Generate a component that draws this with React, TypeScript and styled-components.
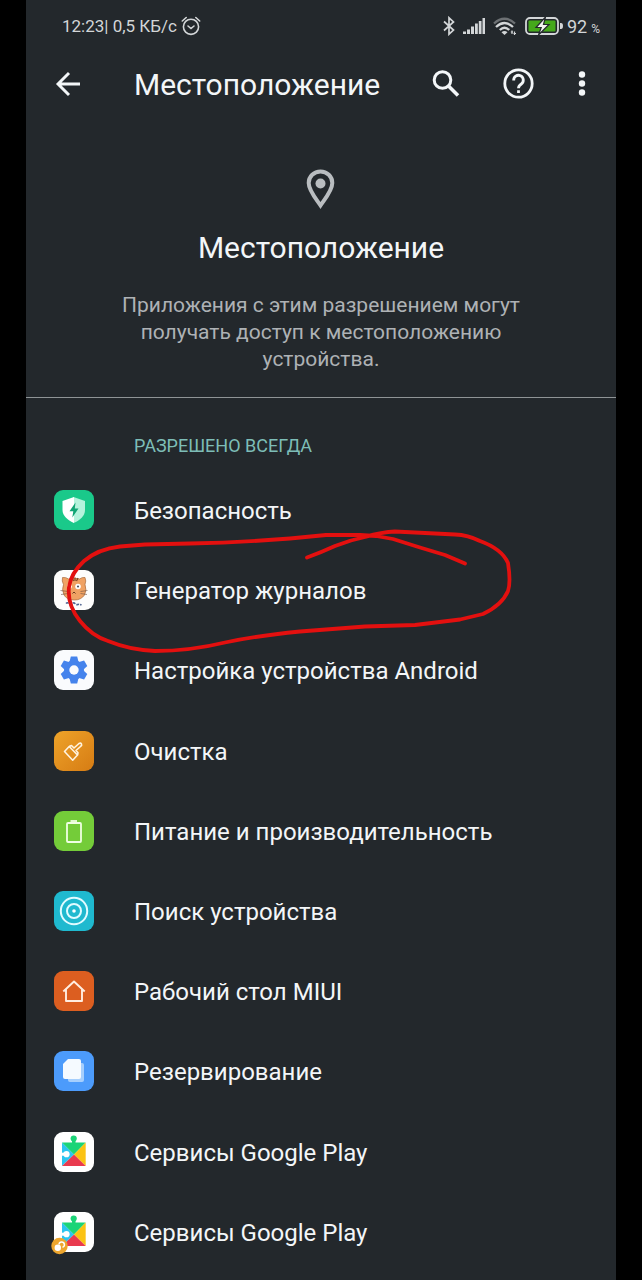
import React from "react";
import styled, { createGlobalStyle } from "styled-components";

const GlobalStyle = createGlobalStyle`
  * { box-sizing: border-box; }
  body {
    margin: 0;
    background: #000;
    color: #f3f6f8;
    font-family: Roboto, "Liberation Sans", sans-serif;
  }
  button { font: inherit; color: inherit; background: none; border: 0; padding: 0; cursor: pointer; }
  svg { display: block; }
`;

const Screen = styled.main`
  display: flex;
  flex-direction: column;
  min-height: 100vh;
  margin: 0 26px;
  padding-bottom: 8px;
  background: #23282c;
  overflow: hidden;
`;

const StatusBar = styled.div`
  display: flex;
  justify-content: space-between;
  align-items: center;
  height: 52px;
  padding: 0 16px 0 36px;
  color: #d3d6d8;
`;

const StatusGroup = styled.div<{ $gap: number }>`
  display: flex;
  align-items: center;
  gap: ${({ $gap }) => $gap}px;
`;

const Clock = styled.span`
  font-size: 17px;
`;

const Percent = styled.span`
  font-size: 18px;
  small { margin-left: 4px; font-size: 12px; }
`;

const Toolbar = styled.header`
  display: flex;
  align-items: center;
  height: 64px;
  padding: 0 24px;
`;

const IconButton = styled.button<{ $slim?: boolean }>`
  display: grid;
  place-items: center;
  width: ${({ $slim }) => ($slim ? 20 : 36)}px;
  height: 36px;
`;

const Title = styled.h1`
  flex: 1;
  margin: 0;
  padding: 2px 0 0 48px;
  font-size: 30px;
  line-height: 36px;
  font-weight: 400;
`;

const Actions = styled.div`
  display: flex;
  gap: 36px;
`;

const Hero = styled.section`
  display: flex;
  flex-direction: column;
  align-items: center;
  padding: 52px 80px 24px;
  border-bottom: 1px solid #8f9496;
  text-align: center;
`;

const HeroTitle = styled.h2`
  margin: 20px 0 26px;
  font-size: 30px;
  line-height: 36px;
  font-weight: 400;
`;

const HeroText = styled.p`
  margin: 0;
  max-width: 420px;
  font-size: 21px;
  line-height: 27px;
  color: #aeb2b5;
`;

const SectionTitle = styled.h3`
  margin: 36px 0 12px 108px;
  font-size: 18px;
  line-height: 24px;
  font-weight: 400;
  color: #7dbdb7;
  text-transform: uppercase;
`;

const AppList = styled.ul`
  flex: 1;
  display: grid;
  grid-auto-rows: minmax(72px, 1fr);
  margin: 0;
  padding: 0;
  list-style: none;
`;

const AppItem = styled.li`
  position: relative;
  display: flex;
`;

const AppRow = styled.button`
  flex: 1;
  display: flex;
  align-items: center;
  gap: 40px;
  padding: 0 28px;
  text-align: left;
`;

const AppName = styled.span`
  padding-top: 2px;
  font-size: 24px;
  line-height: 32px;
`;

const Scribble = styled.svg`
  position: absolute;
  left: 34px;
  top: -24px;
  z-index: 1;
  pointer-events: none;
`;

const Tile = ({ fill, children }: { fill: string; children: React.ReactNode }) => (
  <svg width="40" height="40" viewBox="0 0 40 40" fill="none" aria-hidden="true">
    <rect width="40" height="40" rx="9" fill={fill} />
    {children}
  </svg>
);

const SecurityIcon = () => (
  <Tile fill="#1ac98a">
    <path d="M19.500 7 31 11V20C31 26 26 30.500 19.500 33Z" fill="#b5f3dc" />
    <path d="M20 7 8.500 11V20C8.500 26 14 30.500 20 33Z" fill="#fff" />
    <path d="M21.500 12.500 15.500 21.200H19.300L18.300 27.500 24.500 18.600H20.800Z" fill="#12a574" />
  </Tile>
);

const CatIcon = () => (
  <Tile fill="#fdfdfc">
    <path d="M8.500 7.500Q12 7 14.500 9 20 7 25.500 9 28 7 31 7.500 32.500 11 31 14.500 33 20 30.500 25 27 30 20.500 30 13 30 10 25 7.500 19.500 9.500 14.500 7.500 11 8.500 7.500Z" fill="#f0a263" stroke="#a8683a" strokeWidth=".7" />
    <path d="M18 7.500 19.500 11M21 7.500V11M24 8 22.500 11" stroke="#7a4525" strokeWidth="1.200" />
    <circle cx="24" cy="16.500" r="2.800" fill="#fff" />
    <circle cx="24" cy="16.500" r="1" fill="#3e4650" />
    <circle cx="15.500" cy="16.500" r="2.400" fill="#fff" />
    <path d="M18.500 23.500 20 22 21.500 23.500" stroke="#6b3b20" strokeWidth="1" />
    <path d="M26.500 21.500 33.500 20.500M26.500 23.500 33 24.500M14 21.500 6.500 20.500M14 23.500 7 24.500" stroke="#6b5040" strokeWidth=".6" />
    <path d="M12 33.500Q13.500 32 15 34T18 34 21 33.500 24 34.500 27.500 35" stroke="#4e6390" strokeWidth="1.500" strokeDasharray="3 1" />
  </Tile>
);

const AndroidSetupIcon = () => (
  <Tile fill="#fafbfd">
    <g transform="translate(20 20)" fill="#4583ec">
      <circle r="10" />
      {[0, 60, 120].map((a) => (
        <path key={a} transform={`rotate(${a})`} d="M-3.200-13.500H3.200L4.400-8.500V8.500L3.200 13.500H-3.200L-4.400 8.500V-8.500Z" />
      ))}
      <circle r="4.700" fill="#fafbfd" />
    </g>
  </Tile>
);

const CleanerIcon = () => (
  <Tile fill="url(#cleaner)">
    <defs>
      <linearGradient id="cleaner" x1="0" y1="0" x2="1" y2="1">
        <stop stopColor="#eea329" />
        <stop offset="1" stopColor="#d67c14" />
      </linearGradient>
    </defs>
    <g stroke="#fff3df" strokeWidth="1.600" strokeLinejoin="round">
      <path d="M10.500 20.500 15.200 15.500 23.500 24 18.700 29.200Z" />
      <path d="M15.200 15.500 17.500 14.500 20 17 25 12.500Q26.800 11.500 27.500 13T26.500 15.500L22 19.500 24 21.800 23.500 24" />
    </g>
  </Tile>
);

const PowerIcon = () => (
  <Tile fill="#74cc39">
    <path d="M16.500 10H23" stroke="#efffe3" strokeWidth="1.800" />
    <rect x="13" y="12" width="14" height="19" rx="1" stroke="#efffe3" strokeWidth="1.800" />
  </Tile>
);

const FindDeviceIcon = () => (
  <Tile fill="#1fb9cf">
    <g stroke="#e0fbff" strokeWidth="2">
      <circle cx="20" cy="20" r="13.200" />
      <circle cx="20" cy="20" r="7" />
    </g>
    <circle cx="20" cy="20" r="1.800" fill="#fff" />
  </Tile>
);

const LauncherIcon = () => (
  <Tile fill="#dc5e20">
    <path d="M9.300 20.500 20 10.500 30.700 20.500M12 18.500V30H28V18.500" stroke="#ffede0" strokeWidth="1.900" strokeLinejoin="round" />
  </Tile>
);

const BackupIcon = () => (
  <Tile fill="#4c9bfb">
    <rect x="14" y="12" width="16" height="19" rx="2" fill="#a6cffd" />
    <path d="M14 8H25Q27 8 27 10V26Q27 28 25 28H11Q9 28 9 26V13Z" fill="#f5faff" />
  </Tile>
);

const PlayIcon = ({ badge }: { badge?: boolean }) => (
  <svg width="40" height="40" viewBox="0 0 40 40" overflow="visible" aria-hidden="true">
    <rect width="40" height="40" rx="9" fill="#fff" />
    <path d="M8 10.500 20 22.500 8 34Z" fill="#2cc5ef" />
    <path d="M8 10.500H18V8.500H21.500V10.500H31.700L20 22.500Z" fill="#1bd477" />
    <circle cx="19.700" cy="6.500" r="3.100" fill="#1bd477" />
    <path d="M31.700 10.500V34L20 22.500Z" fill="#fbc313" />
    <path d="M8 34 20 22.500 31.700 34Z" fill="#e93a4e" />
    <path d="M7 20.700H11V23.700H7Z" fill="#fff" />
    <circle cx="12.500" cy="22.200" r="3.100" fill="#fff" />
    {badge && (
      <g>
        <circle cx="5.500" cy="34" r="8.200" fill="#eda62e" />
        <circle cx="3.800" cy="35.800" r="3.200" fill="#fff" />
        <path d="M5 32.500A2.700 2.700 0 1 1 8.500 35.300" fill="none" stroke="#fff" strokeWidth="1.500" />
      </g>
    )}
  </svg>
);

const apps = [
  { name: "Безопасность", icon: <SecurityIcon /> },
  { name: "Генератор журналов", icon: <CatIcon />, circled: true },
  { name: "Настройка устройства Android", icon: <AndroidSetupIcon /> },
  { name: "Очистка", icon: <CleanerIcon /> },
  { name: "Питание и производительность", icon: <PowerIcon /> },
  { name: "Поиск устройства", icon: <FindDeviceIcon /> },
  { name: "Рабочий стол MIUI", icon: <LauncherIcon /> },
  { name: "Резервирование", icon: <BackupIcon /> },
  { name: "Сервисы Google Play", icon: <PlayIcon /> },
  { name: "Сервисы Google Play", icon: <PlayIcon badge /> },
];

export default function App() {
  return (
    <>
      <GlobalStyle />
      <Screen>
        <StatusBar>
          <StatusGroup $gap={4}>
            <Clock>12:23| 0,5 КБ/с</Clock>
            <svg width="20" height="20" viewBox="0 0 20 20" fill="none" stroke="currentColor" strokeWidth="1.600" strokeLinecap="round" aria-hidden="true">
              <circle cx="10" cy="10.800" r="7.600" />
              <path d="M7 10 10 12.500 13 10M1.300 5 5.200 1.500M18.700 5 14.800 1.500" />
            </svg>
          </StatusGroup>
          <StatusGroup $gap={8}>
            <svg width="12" height="20" viewBox="0 0 12 20" fill="none" stroke="currentColor" strokeWidth="1.700" aria-hidden="true">
              <path d="M1 5.500 10.500 14 6 18.200V1.800L10.500 6 1 14.500" />
            </svg>
            <svg width="22" height="18" viewBox="0 0 22 18" fill="currentColor" aria-hidden="true">
              <path d="M0 14.500H3V17H0ZM4 12.500H7V17H4ZM8 9.500H11V17H8ZM12 6.500H14.800V17H12ZM15.800 4H18.500V17H15.800ZM19.500 1H22V17H19.500Z" />
            </svg>
            <svg width="24" height="20" viewBox="0 0 24 20" fill="none" stroke="currentColor" strokeWidth="2.300" aria-hidden="true">
              <path d="M1 7.500Q11.500-2 22 7.500" stroke="#6d7174" />
              <path d="M3 11Q11.500 3 20 11M6.800 14Q11.500 9.500 16.200 14" />
              <path d="M8.500 16.300Q11.500 13.500 14.500 16.300L11.500 19Z" fill="currentColor" stroke="none" />
              <path d="M19 14.500V18M21.500 15.500V19M17.800 16H20M20.500 17.500H23" strokeWidth="1.200" />
            </svg>
            <StatusGroup $gap={4}>
              <svg width="38" height="18" viewBox="0 0 38 18" fill="none" aria-hidden="true">
                <rect x="1" y="1" width="32" height="16" rx="4" stroke="currentColor" strokeWidth="1.800" />
                <rect x="3.500" y="3.500" width="27" height="11" rx="1" fill="#45a91b" />
                <path d="M35 6H36Q38 6 38 9T36 12H35Z" fill="currentColor" />
                <path d="M20.500 0 11 10.500H16.200L13.500 18 24 7.500H18.500Z" fill="#f2f4f2" stroke="#23282c" strokeWidth="1.200" />
              </svg>
              <Percent>92<small>%</small></Percent>
            </StatusGroup>
          </StatusGroup>
        </StatusBar>

        <Toolbar>
          <IconButton aria-label="Назад">
            <svg width="26" height="26" viewBox="0 0 26 26" fill="none" stroke="currentColor" strokeWidth="2.900" aria-hidden="true">
              <path d="M25 13H3M14 2 3 13 14 24" />
            </svg>
          </IconButton>
          <Title>Местоположение</Title>
          <Actions>
            <IconButton aria-label="Поиск">
              <svg width="28" height="28" viewBox="0 0 28 28" fill="none" stroke="currentColor" strokeWidth="3" aria-hidden="true">
                <circle cx="10.500" cy="10" r="8.300" />
                <path d="M16.500 16 26 25.500" strokeWidth="3.600" />
              </svg>
            </IconButton>
            <IconButton aria-label="Справка">
              <svg width="32" height="32" viewBox="0 0 32 32" fill="none" stroke="currentColor" strokeWidth="2.800" aria-hidden="true">
                <circle cx="16.500" cy="15.500" r="13.700" />
                <path d="M11.700 12.500A4.800 4.800 0 1 1 19.300 16Q16.500 17.900 16.500 20.300M16.500 22.200V25" />
              </svg>
            </IconButton>
            <IconButton $slim aria-label="Ещё">
              <svg width="8" height="28" viewBox="0 0 8 28" fill="currentColor" aria-hidden="true">
                <circle cx="4" cy="4.500" r="3.200" />
                <circle cx="4" cy="13.500" r="3.200" />
                <circle cx="4" cy="22.500" r="3.200" />
              </svg>
            </IconButton>
          </Actions>
        </Toolbar>

        <Hero>
          <svg width="30" height="42" viewBox="0 0 30 42" fill="none" aria-hidden="true">
            <path d="M14.500 3.500C8 3.500 2.700 8.500 2.700 15 2.700 22.500 10.500 31.500 14.500 37.500 18.500 31.500 26.300 22.500 26.300 15 26.300 8.500 21 3.500 14.500 3.500Z" stroke="#b9bdc0" strokeWidth="4" />
            <circle cx="14.500" cy="15.500" r="5" fill="#b9bdc0" />
          </svg>
          <HeroTitle>Местоположение</HeroTitle>
          <HeroText>Приложения с этим разрешением могут получать доступ к местоположению устройства.</HeroText>
        </Hero>

        <SectionTitle>Разрешено всегда</SectionTitle>
        <AppList>
          {apps.map(({ name, icon, circled }, i) => (
            <AppItem key={i}>
              <AppRow>
                {icon}
                <AppName>{name}</AppName>
              </AppRow>
              {circled && (
                <Scribble width="460" height="130" viewBox="60 527 460 130" fill="none" stroke="#e3100f" strokeWidth="3.800" strokeLinecap="round" strokeLinejoin="round" aria-hidden="true">
                  <path d="M465 564.500 445 556 420 548.500 393 540 376 537 360 536H326L290 539.500Q240 543.500 190 544.500L145 545.500 120 547.500Q98 550 84 562 71 574 69 588 67 606 80 622 92 637 108 642 130 651 155 652 190 652 225 643.500 255 637 300 632.500L365 627.500 415 626 460 620.500 483 615Q502 606 508 592 511 583 508 564 502 550 480 542 468 536 455 535.500L395 532.500Q382 533 365 538 350 541 335 547 322 553 307 558.500" />
                </Scribble>
              )}
            </AppItem>
          ))}
        </AppList>
      </Screen>
    </>
  );
}
